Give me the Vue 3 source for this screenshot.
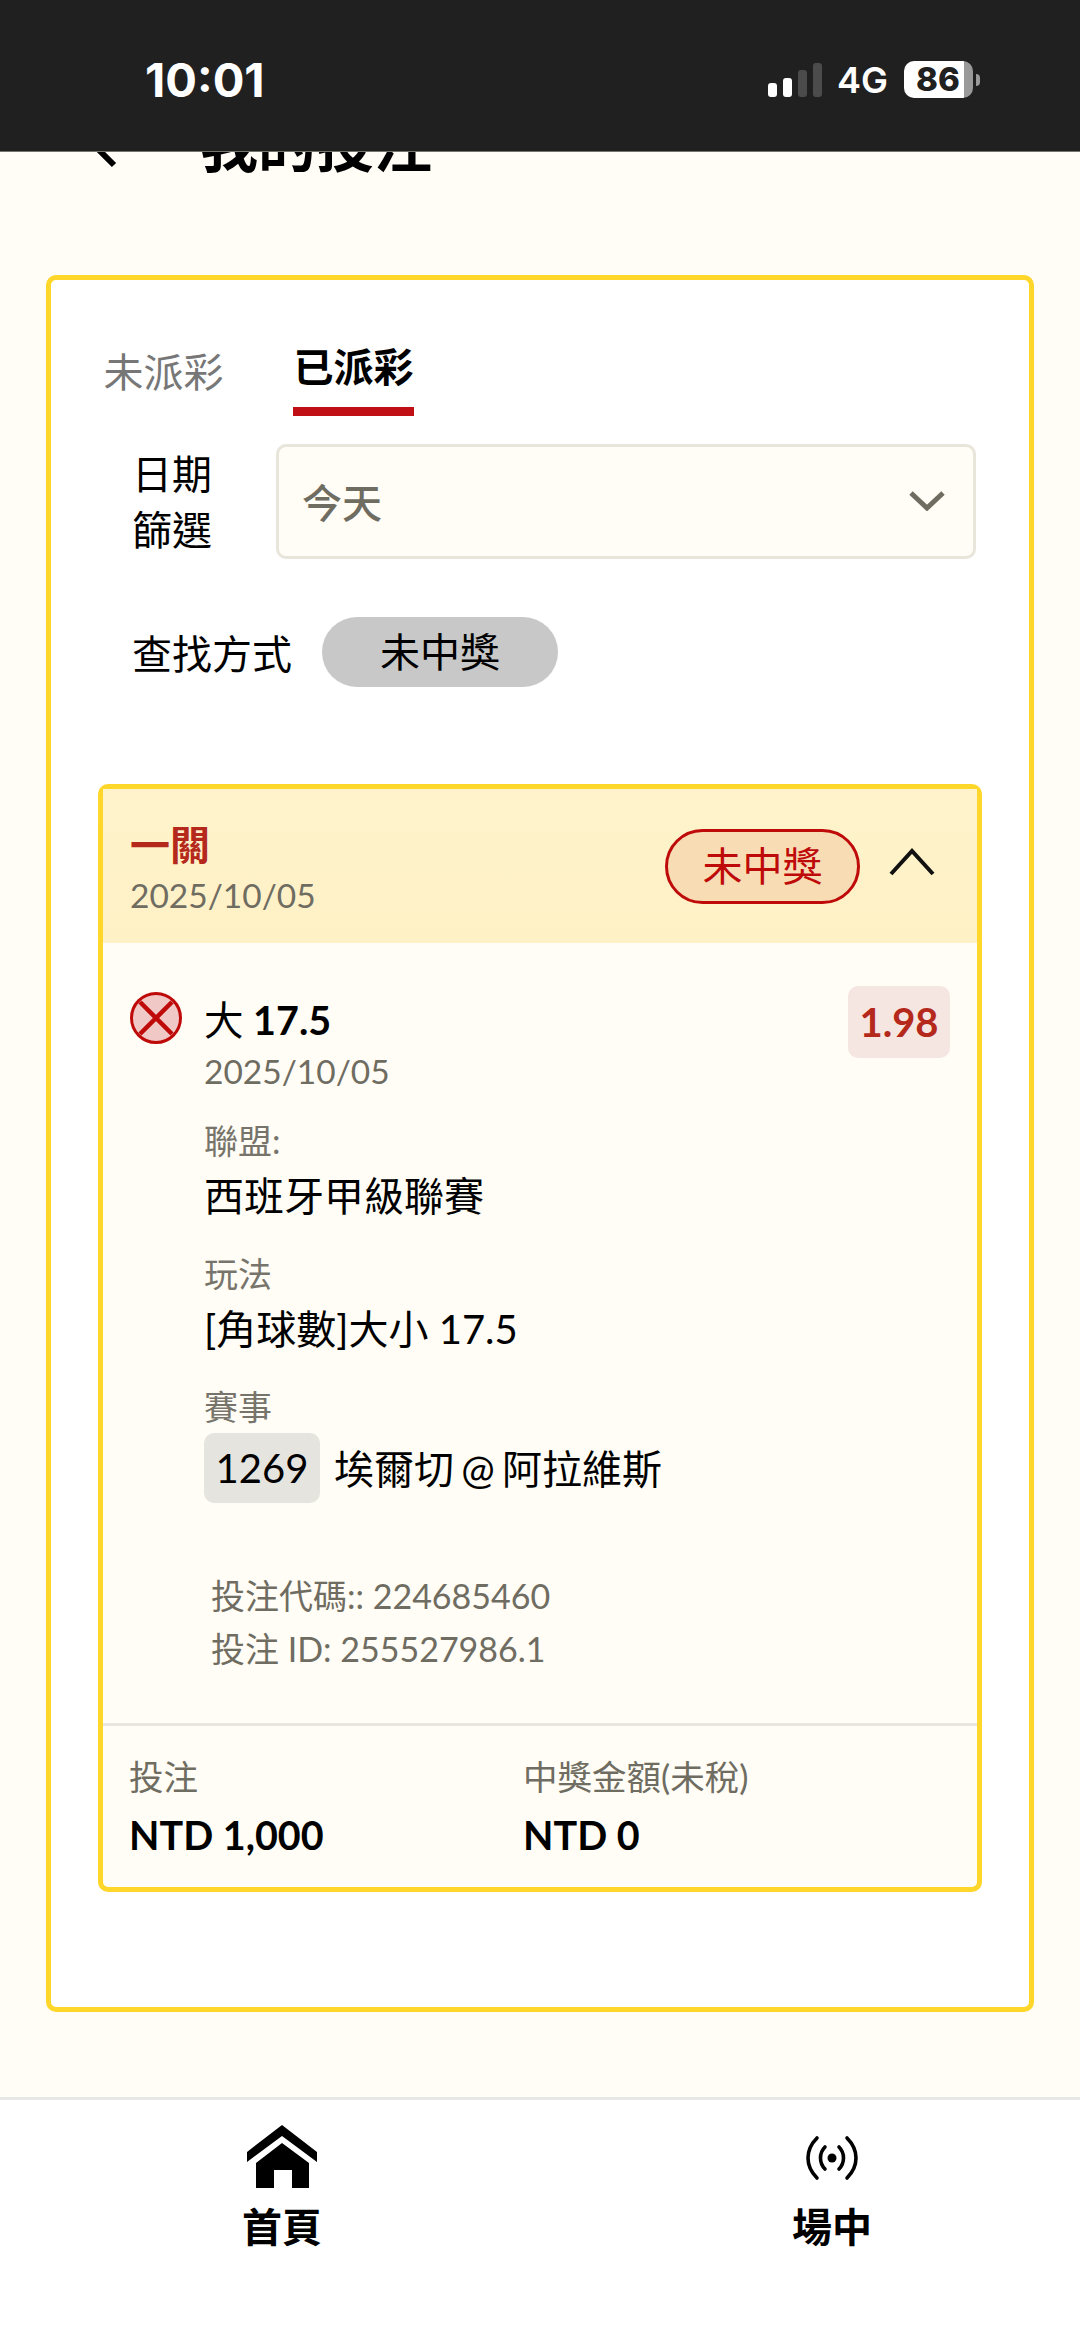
<script setup>
const bars = [14, 19, 27, 34]
const details = [
  { label: '聯盟:', value: '西班牙甲級聯賽' },
  { label: '玩法', value: '[角球數]大小 17.5' },
]
</script>

<template>
  <div class="page">
    <!-- status bar sits over the scrolled page -->
    <div class="status">
      <span class="time">10:01</span>
      <div class="status-right">
        <div class="signal">
          <span
            v-for="(h, i) in bars"
            :key="h"
            class="bar"
            :class="{ dim: i > 1 }"
            :style="{ height: h + 'px' }"
          ></span>
        </div>
        <span class="net">4G</span>
        <div class="battery">86</div>
        <span class="nub"></span>
      </div>
    </div>

    <header class="top">
      <svg class="back" width="36" height="60" viewBox="0 0 36 60">
        <path d="M30 2 L6 26 L30 50" fill="none" stroke="#000" stroke-width="6" />
      </svg>
      <h1>我的投注</h1>
    </header>

    <section class="panel">
      <div class="tabs">
        <span class="tab">未派彩</span>
        <span class="tab active">已派彩</span>
      </div>

      <div class="filter">
        <div class="filter-label">日期<br />篩選</div>
        <div class="select">
          <span>今天</span>
          <svg width="36" height="20" viewBox="0 0 36 20">
            <path d="M2 2 L18 17 L34 2" fill="none" stroke="#6f6c62" stroke-width="5" />
          </svg>
        </div>
      </div>

      <div class="search">
        <span class="search-label">查找方式</span>
        <span class="pill">未中獎</span>
      </div>

      <article class="bet">
        <div class="bet-head">
          <div class="bet-title">
            <div class="kind">一關</div>
            <div class="head-date">2025/10/05</div>
          </div>
          <span class="badge">未中獎</span>
          <svg class="toggle" width="46" height="28" viewBox="0 0 46 28">
            <path d="M2 26 L23 3 L44 26" fill="none" stroke="#111" stroke-width="4" />
          </svg>
        </div>

        <div class="bet-body">
          <div class="leg">
            <svg class="lost" width="52" height="52" viewBox="0 0 52 52">
              <circle cx="26" cy="26" r="24.5" fill="#f0c9c6" stroke="#bf0a0a" stroke-width="3" />
              <path d="M10 10 L42 42 M42 10 L10 42" stroke="#bf0a0a" stroke-width="4.5" />
            </svg>
            <div class="leg-info">
              <div class="pick"><span class="plain">大</span> 17.5</div>
              <div class="leg-date">2025/10/05</div>

              <template v-for="d in details" :key="d.label">
                <div class="label">{{ d.label }}</div>
                <div class="value">{{ d.value }}</div>
              </template>

              <div class="label">賽事</div>
              <div class="match">
                <span class="code">1269</span>
                <span class="teams">埃爾切 @ 阿拉維斯</span>
              </div>
            </div>
            <span class="odds">1.98</span>
          </div>

          <div class="meta">
            <div>投注代碼:: 224685460</div>
            <div>投注 ID: 255527986.1</div>
          </div>
        </div>

        <div class="bet-foot">
          <div class="col">
            <div class="foot-label">投注</div>
            <div class="amount">NTD 1,000</div>
          </div>
          <div class="col">
            <div class="foot-label">中獎金額(未稅)</div>
            <div class="amount">NTD 0</div>
          </div>
        </div>
      </article>
    </section>

    <nav class="nav">
      <a class="nav-item">
        <svg class="nav-icon" width="70" height="63" viewBox="0 0 70 63">
          <path d="M35 0 L70 27 L70 37 L35 11 L0 37 L0 27 Z" />
          <path d="M35 18 L62 38 L62 63 L45 63 L45 45 L27 45 L27 63 L9 63 L9 38 Z" />
        </svg>
        <span>首頁</span>
      </a>
      <a class="nav-item">
        <svg class="nav-icon" width="60" height="63" viewBox="0 0 60 63">
          <g fill="none" stroke="#000" stroke-width="3.6" stroke-linecap="round" transform="translate(0 10)">
            <path d="M45 3 C57 15 57 31 45 43" />
            <path d="M15 3 C3 15 3 31 15 43" />
            <path d="M37 12 C43 18 43 28 37 34" />
            <path d="M23 12 C17 18 17 28 23 34" />
          </g>
          <circle cx="30" cy="33" r="4.5" />
        </svg>
        <span>場中</span>
      </a>
    </nav>
  </div>
</template>

<style scoped>
.page {
  position: relative;
  height: 2339px;
  overflow: hidden;
  display: flex;
  flex-direction: column;
  background: #fffdf5;
  color: #000;
  font-family: Lato, "Noto Sans CJK TC", sans-serif;
}

/* status bar */
.status {
  position: absolute;
  top: 0;
  left: 0;
  right: 0;
  height: 152px;
  display: flex;
  align-items: center;
  justify-content: space-between;
  padding: 8px 100px 0 145px;
  box-sizing: border-box;
  background: #202020;
  border-bottom: 1px solid #77756c;
  color: #fff;
  font-family: Inter, sans-serif;
}

.time {
  font-size: 47px;
  font-weight: 700;
}

.status-right {
  display: flex;
  align-items: center;
}

.signal {
  display: flex;
  align-items: flex-end;
  gap: 6px;
  margin-right: 15px;
}

.bar {
  width: 9px;
  border-radius: 3px;
  background: #fff;
}

.bar.dim {
  background: #4b4b4b;
}

.net {
  font-size: 36px;
  font-weight: 600;
  margin-right: 16px;
}

.battery {
  width: 69px;
  height: 37px;
  border-radius: 10px;
  background: linear-gradient(to right, #fff 87%, #999 87%);
  color: #202020;
  font-size: 33px;
  font-weight: 800;
  line-height: 37px;
  padding-left: 12px;
  box-sizing: border-box;
}

.nub {
  width: 4px;
  height: 12px;
  margin-left: 3px;
  border-radius: 0 4px 4px 0;
  background: #999;
}

/* header, mostly scrolled away */
.top {
  display: flex;
  align-items: center;
  gap: 80px;
  height: 100px;
  margin-top: 95px;
  padding-left: 84px;
}

.top h1 {
  margin: 0;
  font-size: 58px;
  font-weight: 700;
  line-height: 100px;
}

.panel {
  height: 1737px;
  margin: 80px 46px 0;
  padding: 63px 47px 0;
  box-sizing: border-box;
  background: #fff;
  border: 5px solid #ffd62a;
  border-radius: 10px;
}

.tabs {
  display: flex;
  gap: 69px;
  margin-left: 5px;
  align-items: flex-start;
}

.tab {
  width: 121px;
  padding-top: 5px;
  font-size: 40px;
  line-height: 48px;
  color: #777;
  text-align: center;
}

.tab.active {
  padding: 0 0 16px;
  border-bottom: 9px solid #c01015;
  color: #000;
  font-weight: 700;
}

.filter {
  display: flex;
  align-items: center;
  margin: 28px 6px 0 34px;
}

.filter-label {
  width: 80px;
  margin-right: 64px;
  font-size: 40px;
  line-height: 56px;
}

.select {
  flex: 1;
  height: 115px;
  display: flex;
  align-items: center;
  justify-content: space-between;
  padding: 0 28px 2px 23px;
  box-sizing: border-box;
  background: #fffdf5;
  border: 3px solid #e8e5db;
  border-radius: 10px;
  font-size: 40px;
  font-weight: 500;
  color: #6f6c62;
}

.search {
  display: flex;
  align-items: center;
  margin: 58px 0 0 34px;
  font-size: 40px;
}

.search-label {
  width: 160px;
  margin-right: 30px;
}

.pill {
  width: 236px;
  height: 70px;
  border-radius: 35px;
  background: #c8c8c8;
  line-height: 70px;
  text-align: center;
}

/* bet card */
.bet {
  margin-top: 97px;
  background: #fffdf5;
  border: 5px solid #ffd62a;
  border-radius: 10px;
}

.bet-head {
  height: 154px;
  display: flex;
  align-items: center;
  padding: 0 42px 0 27px;
  background: linear-gradient(#fef3cb, #fff1c6);
}

.bet-title {
  flex: 1;
  padding-top: 8px;
}

.kind {
  font-size: 40px;
  font-weight: 700;
  line-height: 50px;
  color: #b5291c;
}

.head-date {
  font-size: 33.5px;
  line-height: 50px;
  color: #6f6c62;
}

.badge {
  width: 195px;
  height: 75px;
  box-sizing: border-box;
  border: 3px solid #bf0a0a;
  border-radius: 38px;
  background: #f7dcb4;
  color: #bf0a0a;
  font-size: 40px;
  line-height: 69px;
  text-align: center;
}

.toggle {
  margin: 0 0 8px 29px;
}

.bet-body {
  padding: 43px 27px 48px;
}

.leg {
  display: flex;
  align-items: flex-start;
}

.lost {
  flex: none;
  margin: 6px 22px 0 0;
}

.leg-info {
  flex: 1;
  padding-top: 9px;
}

.pick {
  font-size: 39.5px;
  font-weight: 700;
  line-height: 50px;
}

.plain {
  font-weight: 400;
}

.leg-date {
  margin: 1px 0 25px;
  font-size: 33.5px;
  line-height: 50px;
  color: #6f6c62;
}

.label {
  font-size: 34px;
  line-height: 40px;
  color: #77746b;
}

.value {
  margin: 10px 0 33px;
  font-size: 40px;
  line-height: 50px;
}

.match {
  display: flex;
  align-items: center;
  gap: 14px;
  margin-top: 6px;
  font-size: 40px;
}

.teams {
  padding-bottom: 3px;
  word-spacing: -3px;
}

.code {
  width: 116px;
  height: 70px;
  border-radius: 10px;
  background: #e6e4df;
  line-height: 70px;
  text-align: center;
}

.odds {
  flex: none;
  width: 102px;
  height: 72px;
  border-radius: 10px;
  background: #f6e6e1;
  color: #b5291c;
  font-size: 40px;
  font-weight: 700;
  line-height: 72px;
  text-align: center;
}

.meta {
  margin: 66px 0 0 81px;
  font-size: 34px;
  line-height: 53px;
  color: #6f6c62;
}

.bet-foot {
  display: flex;
  padding: 26px 0 27px 26px;
  border-top: 3px solid #e8e6df;
}

.col {
  width: 394px;
}

.foot-label {
  margin-bottom: 8px;
  font-size: 34.5px;
  line-height: 50px;
  color: #6f6c62;
}

.amount {
  font-size: 39.5px;
  font-weight: 700;
  line-height: 50px;
}

/* bottom nav */
.nav {
  margin-top: auto;
  height: 242px;
  box-sizing: border-box;
  display: flex;
  gap: 450px;
  padding: 25px 0 0 232px;
  background: #fff;
  border-top: 3px solid #e8e8e8;
}

.nav-item {
  width: 100px;
  display: flex;
  flex-direction: column;
  align-items: center;
  font-size: 40px;
  font-weight: 700;
  line-height: 50px;
}

.nav-icon {
  display: block;
  margin-bottom: 14px;
}
</style>
